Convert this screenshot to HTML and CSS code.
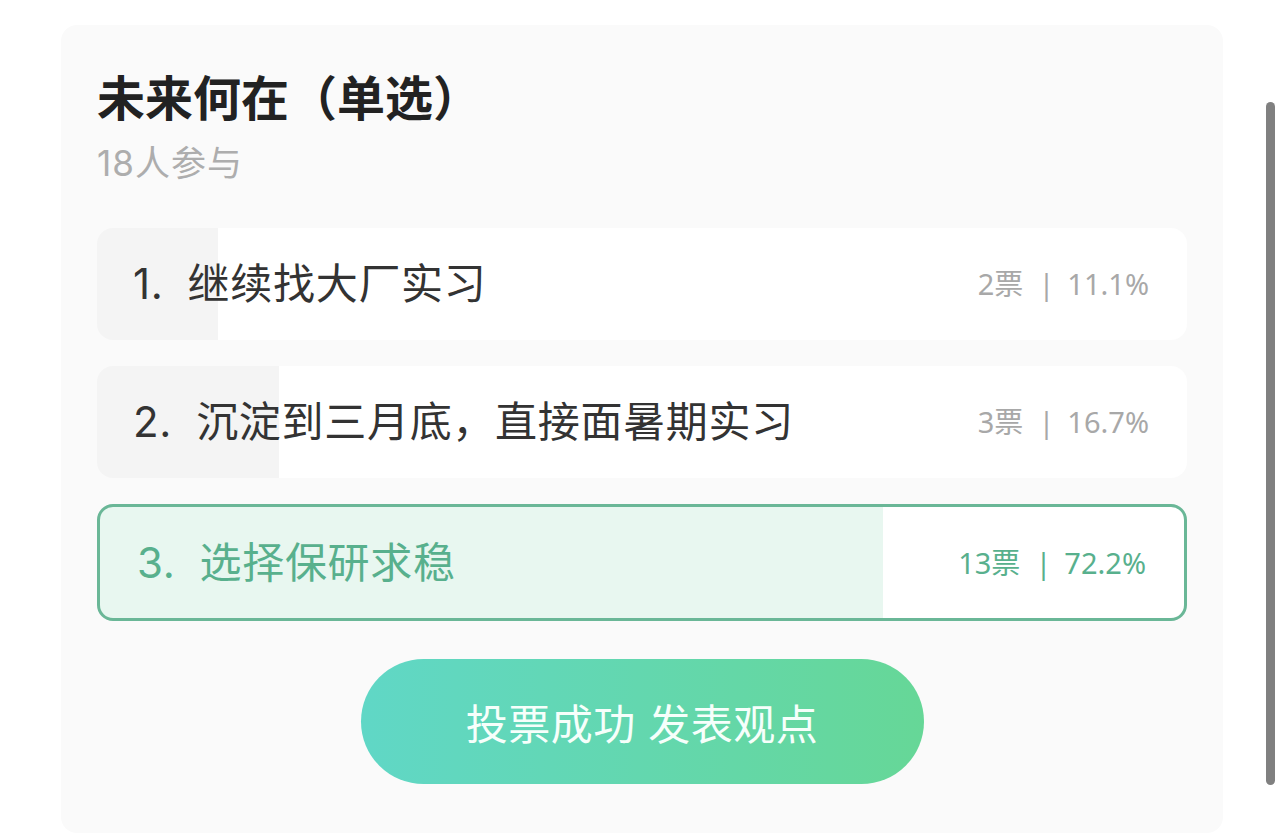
FILE: index.html
```html
<!DOCTYPE html>
<html lang="zh-CN">
<head>
<meta charset="utf-8">
<title>投票</title>
<link rel="stylesheet" href="styles.css">
</head>
<body>
<div class="page">
  <section class="card">
    <h1 class="title">未来何在（单选）</h1>
    <div class="sub">18人参与</div>
    <div class="options">
      <div class="option" style="--p:11.1%">
        <div class="label"><span class="num">1.</span><span>继续找大厂实习</span></div>
        <div class="stat">2票<span class="sep">|</span>11.1%</div>
      </div>
      <div class="option" style="--p:16.7%">
        <div class="label"><span class="num">2.</span><span>沉淀到三月底，直接面暑期实习</span></div>
        <div class="stat">3票<span class="sep">|</span>16.7%</div>
      </div>
      <div class="option selected" style="--p:72.2%">
        <div class="label"><span class="num">3.</span><span>选择保研求稳</span></div>
        <div class="stat">13票<span class="sep">|</span>72.2%</div>
      </div>
    </div>
    <div class="actions">
      <button class="btn">投票成功 发表观点</button>
    </div>
  </section>
</div>
<div class="scrollbar"></div>
</body>
</html>
```

FILE: styles.css
```css
* { box-sizing: border-box; }
html, body {
  margin: 0;
  padding: 0;
  background: #ffffff;
}
body {
  font-family: Inter, "Noto Sans CJK SC", sans-serif;
  width: 1284px;
  height: 840px;
  overflow: hidden;
}
.page {
  padding: 25px 61px 0 61px;
}
.card {
  width: 1162px;
  height: 808px;
  background: #fafafa;
  border-radius: 16px;
  padding: 45px 36px 0 36px;
}
.title {
  margin: 0;
  font-size: 48px;
  line-height: 58px;
  font-weight: 700;
  color: #222222;
}
.sub {
  margin-top: 14px;
  font-size: 35px;
  line-height: 42px;
  letter-spacing: 1px;
  color: #adadad;
}
.options {
  margin-top: 44px;
  display: flex;
  flex-direction: column;
  gap: 26px;
}
.option {
  height: 112px;
  border-radius: 16px;
  display: flex;
  align-items: center;
  justify-content: space-between;
  padding: 0 38px 0 36px;
  background: linear-gradient(to right, #f4f4f4 var(--p), #ffffff var(--p));
}
.option.selected {
  height: 117px;
  border: 3px solid #6ab797;
  padding: 0 38px 0 37px;
  background: linear-gradient(to right, #e8f7f0 var(--p), #ffffff var(--p));
}
.label {
  display: flex;
  align-items: center;
  font-size: 42px;
  line-height: 50px;
  letter-spacing: 0.7px;
  color: #333333;
}
.num {
  margin-right: 24px;
}
.selected .label,
.selected .stat {
  color: #58b08d;
}
.stat {
  font-family: "Noto Sans", "Noto Sans CJK SC", sans-serif;
  font-size: 29px;
  line-height: 36px;
  color: #a8a8a8;
  display: flex;
  align-items: center;
}
.sep {
  margin: 0 13px 0 15px;
}
.actions {
  margin-top: 38px;
  display: flex;
  justify-content: center;
}
.btn {
  width: 563px;
  height: 125px;
  border: none;
  border-radius: 63px;
  background: linear-gradient(to right, #60d7c6, #66d797);
  color: #f6fffb;
  font-family: Inter, "Noto Sans CJK SC", sans-serif;
  font-size: 42px;
  font-weight: 400;
  letter-spacing: 0.5px;
  padding: 0;
}
.scrollbar {
  position: fixed;
  left: 1266px;
  top: 102px;
  width: 9px;
  height: 683px;
  border-radius: 5px;
  background: #808080;
}
```
